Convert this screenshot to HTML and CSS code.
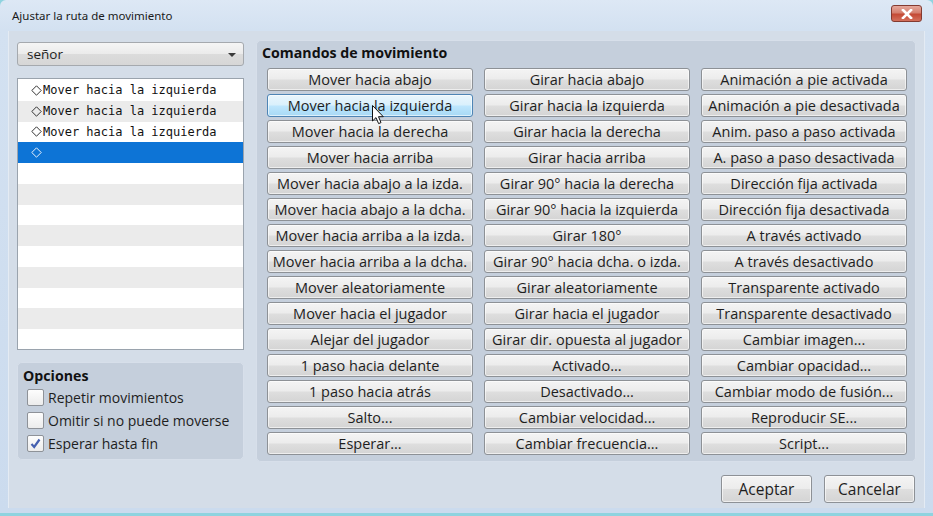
FILE: index.html
```html
<!DOCTYPE html>
<html>
<head>
<meta charset="utf-8">
<link rel="stylesheet" href="styles.css">
</head>
<body>
<div class="window">
  <div class="titlebar">
    <span class="title">Ajustar la ruta de movimiento</span>
    <span class="close"><svg width="12" height="10" viewBox="0 0 12 10"><path d="M2 1 L10 9 M10 1 L2 9" stroke="#fff" stroke-width="2.6" stroke-linecap="square"/></svg></span>
  </div>
  <div class="client">
    <div class="main">
      <div class="leftcol">
        <div class="combo"><span>señor</span><svg class="arrow" width="8" height="4" viewBox="0 0 8 4"><path d="M0 0 H8 L4 4 Z" fill="#3a3a3a"/></svg></div>
        <div class="list">
          <div class="row"><span class="dia"><svg width="11" height="11" viewBox="0 0 11 11"><path d="M5.5 0.8 L10.2 5.5 L5.5 10.2 L0.8 5.5 Z" fill="none" stroke="#333" stroke-width="1"/></svg></span>Mover hacia la izquierda</div>
          <div class="row alt"><span class="dia"><svg width="11" height="11" viewBox="0 0 11 11"><path d="M5.5 0.8 L10.2 5.5 L5.5 10.2 L0.8 5.5 Z" fill="none" stroke="#333" stroke-width="1"/></svg></span>Mover hacia la izquierda</div>
          <div class="row"><span class="dia"><svg width="11" height="11" viewBox="0 0 11 11"><path d="M5.5 0.8 L10.2 5.5 L5.5 10.2 L0.8 5.5 Z" fill="none" stroke="#333" stroke-width="1"/></svg></span>Mover hacia la izquierda</div>
          <div class="row sel"><span class="dia"><svg width="11" height="11" viewBox="0 0 11 11"><path d="M5.5 0.8 L10.2 5.5 L5.5 10.2 L0.8 5.5 Z" fill="none" stroke="#e8f0fb" stroke-width="1"/></svg></span></div>
          <div class="row"></div>
          <div class="row alt"></div>
          <div class="row"></div>
          <div class="row alt"></div>
          <div class="row"></div>
          <div class="row alt"></div>
          <div class="row"></div>
          <div class="row alt"></div>
          <div class="row"></div>
        </div>
        <div class="options">
          <div class="ptitle">Opciones</div>
          <label class="chk"><span class="box"></span>Repetir movimientos</label>
          <label class="chk"><span class="box"></span>Omitir si no puede moverse</label>
          <label class="chk"><span class="box"><svg width="13" height="13" viewBox="0 0 13 13"><path d="M2.5 7 L5.2 10 L10.5 2.5" fill="none" stroke="#4560b0" stroke-width="2.2"/></svg></span>Esperar hasta fin</label>
        </div>
      </div>
      <div class="commands">
        <div class="ptitle">Comandos de movimiento</div>
        <div class="grid">
          <div class="btn">Mover hacia abajo</div>
          <div class="btn hover">Mover hacia la izquierda</div>
          <div class="btn">Mover hacia la derecha</div>
          <div class="btn">Mover hacia arriba</div>
          <div class="btn">Mover hacia abajo a la izda.</div>
          <div class="btn">Mover hacia abajo a la dcha.</div>
          <div class="btn">Mover hacia arriba a la izda.</div>
          <div class="btn">Mover hacia arriba a la dcha.</div>
          <div class="btn">Mover aleatoriamente</div>
          <div class="btn">Mover hacia el jugador</div>
          <div class="btn">Alejar del jugador</div>
          <div class="btn">1 paso hacia delante</div>
          <div class="btn">1 paso hacia atrás</div>
          <div class="btn">Salto...</div>
          <div class="btn">Esperar...</div>

          <div class="btn">Girar hacia abajo</div>
          <div class="btn">Girar hacia la izquierda</div>
          <div class="btn">Girar hacia la derecha</div>
          <div class="btn">Girar hacia arriba</div>
          <div class="btn">Girar 90° hacia la derecha</div>
          <div class="btn">Girar 90° hacia la izquierda</div>
          <div class="btn">Girar 180°</div>
          <div class="btn">Girar 90° hacia dcha. o izda.</div>
          <div class="btn">Girar aleatoriamente</div>
          <div class="btn">Girar hacia el jugador</div>
          <div class="btn">Girar dir. opuesta al jugador</div>
          <div class="btn">Activado...</div>
          <div class="btn">Desactivado...</div>
          <div class="btn">Cambiar velocidad...</div>
          <div class="btn">Cambiar frecuencia...</div>

          <div class="btn">Animación a pie activada</div>
          <div class="btn">Animación a pie desactivada</div>
          <div class="btn">Anim. paso a paso activada</div>
          <div class="btn">A. paso a paso desactivada</div>
          <div class="btn">Dirección fija activada</div>
          <div class="btn">Dirección fija desactivada</div>
          <div class="btn">A través activado</div>
          <div class="btn">A través desactivado</div>
          <div class="btn">Transparente activado</div>
          <div class="btn">Transparente desactivado</div>
          <div class="btn">Cambiar imagen...</div>
          <div class="btn">Cambiar opacidad...</div>
          <div class="btn">Cambiar modo de fusión...</div>
          <div class="btn">Reproducir SE...</div>
          <div class="btn">Script...</div>
        </div>
      </div>
    </div>
    <div class="footer">
      <div class="btn big">Aceptar</div>
      <div class="btn big">Cancelar</div>
    </div>
  </div>
  <svg class="cursor" width="13" height="20" viewBox="0 0 13 20"><path d="M0.5 0.5 L0.5 16 L4 12.6 L6.6 18.6 L9 17.6 L6.5 11.7 L11.3 11.7 Z" fill="#fff" stroke="#111" stroke-width="1" stroke-linejoin="miter"/></svg>
</div>
</body>
</html>
```

FILE: styles.css
```css
html, body {
  margin: 0;
  padding: 0;
}
body {
  width: 933px;
  height: 516px;
  overflow: hidden;
  background: #8fd3df;
  font-family: "Open Sans", "DejaVu Sans", sans-serif;
}
.window {
  position: relative;
  width: 933px;
  height: 513px;
  background: linear-gradient(to bottom, #dde8f5 0px, #d3e1f1 30px, #cbdbee 100%);
  border-radius: 6px 6px 0 0;
  box-sizing: border-box;
  padding: 0 8px 5px 8px;
}
.titlebar {
  height: 31px;
  display: flex;
  align-items: center;
  justify-content: space-between;
  margin: 0 -8px;
  padding: 0 11px 0 12px;
}
.title {
  font-family: "Noto Sans", sans-serif;
  font-size: 11.5px;
  color: #1a1a1a;
  margin-top: -1px;
}
.close {
  width: 31px;
  height: 17px;
  margin-top: -4px;
  box-sizing: border-box;
  border: 1px solid #833a30;
  border-radius: 3px;
  background: linear-gradient(to bottom, #e6a89c 0%, #d5806f 45%, #c44a35 55%, #d3705c 100%);
  display: flex;
  align-items: center;
  justify-content: center;
}
.client {
  height: 477px;
  background: #d4dde8;
  box-shadow: inset 1px 0 0 #e4ebf3, inset -1px 0 0 #e4ebf3;
}
.main {
  display: flex;
  padding: 9px 0 0 9px;
  height: 431px;
  box-sizing: border-box;
}
.leftcol {
  width: 227px;
  padding-top: 2px;
  display: flex;
  flex-direction: column;
}
.combo {
  height: 24px;
  box-sizing: border-box;
  border: 1px solid #a5a9ae;
  border-radius: 3px;
  background: linear-gradient(to bottom, #f5f5f5 0%, #ebebeb 50%, #dcdcdc 51%, #d6d6d6 100%);
  display: flex;
  align-items: center;
  justify-content: space-between;
  padding: 0 7px 0 9px;
  font-size: 13.5px;
  color: #1e1e1e;
}
.arrow {
  margin-top: 1px;
}
.list {
  margin-top: 12px;
  height: 272px;
  box-sizing: border-box;
  border: 1px solid #9aa3ad;
  background: #fff;
  padding-top: 1px;
  overflow: hidden;
  font-family: "DejaVu Sans Mono", monospace;
  font-size: 12px;
  color: #111;
}
.row {
  height: 20.75px;
  display: flex;
  align-items: center;
  padding-left: 13px;
  white-space: pre;
}
.row.alt {
  background: #ebebeb;
}
.row.sel {
  background: #0d74d6;
}
.dia {
  width: 12px;
  display: inline-flex;
  align-items: center;
}
.options {
  margin-top: 12px;
  height: 98px;
  box-sizing: border-box;
  border-radius: 5px;
  background: #c5cfdc;
  border: 1px solid #d7dfea;
  padding: 3px 0 0 5px;
  font-size: 14px;
  color: #1e1e1e;
}
.ptitle {
  font-weight: 700;
  font-size: 14.2px;
  color: #111;
  line-height: 19px;
}
.chk {
  display: flex;
  align-items: center;
  height: 22px;
  padding-left: 4px;
  padding-top: 1px;
}
.box {
  width: 17px;
  height: 17px;
  box-sizing: border-box;
  border: 1px solid #8e9298;
  border-radius: 2px;
  background: linear-gradient(to bottom, #fdfdfd, #ececec);
  margin-right: 4px;
  display: inline-flex;
  align-items: center;
  justify-content: center;
}
.commands {
  margin-left: 12px;
  width: 660px;
  height: 422px;
  box-sizing: border-box;
  border-radius: 5px;
  background: #c5cfdc;
  border: 1px solid #d7dfea;
  padding: 2px 0 0 5px;
}
.grid {
  margin-top: 6px;
  margin-left: 5px;
  display: grid;
  grid-template-columns: 206px 206px 206px;
  grid-template-rows: repeat(15, 23px);
  grid-auto-flow: column;
  column-gap: 11px;
  row-gap: 3px;
}
.btn {
  box-sizing: border-box;
  border: 1px solid #8d9196;
  border-radius: 3px;
  background: linear-gradient(to bottom, #f4f4f4 0%, #ececec 48%, #dedede 52%, #d4d4d4 100%);
  box-shadow: inset 0 0 0 1px rgba(255,255,255,0.6);
  display: flex;
  align-items: center;
  justify-content: center;
  font-size: 14.5px;
  color: #1e1e1e;
  white-space: nowrap;
}
.btn.hover {
  border-color: #4f85b5;
  background: linear-gradient(to bottom, #eaf6fd 0%, #d9f0fc 48%, #bee6fd 52%, #a7d9f5 100%);
}
.footer {
  display: flex;
  justify-content: flex-end;
  gap: 12px;
  padding: 13px 10px 0 0;
}
.btn.big {
  width: 91px;
  height: 28px;
  font-size: 15.5px;
}
.cursor {
  position: absolute;
  left: 372px;
  top: 105px;
}
```
